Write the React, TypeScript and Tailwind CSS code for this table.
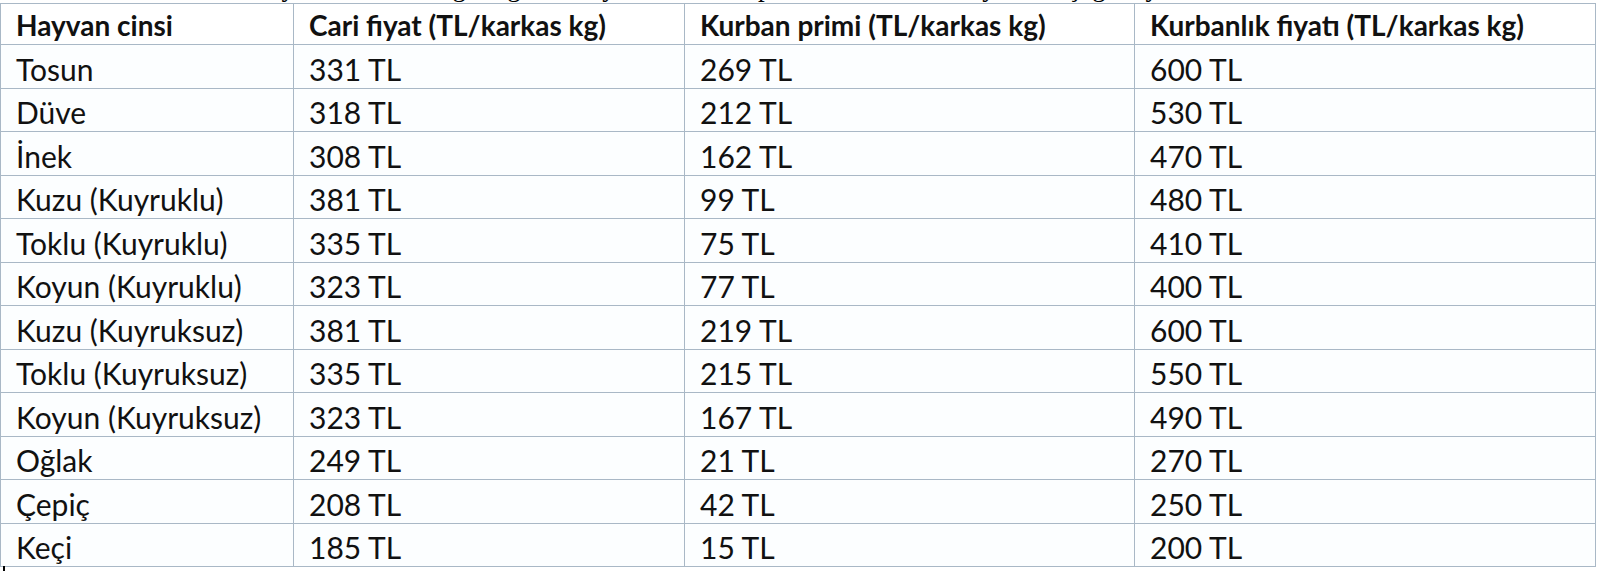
import React from "react";

const rows: [string, string, string, string][] = [
  ["Tosun", "331 TL", "269 TL", "600 TL"],
  ["Düve", "318 TL", "212 TL", "530 TL"],
  ["İnek", "308 TL", "162 TL", "470 TL"],
  ["Kuzu (Kuyruklu)", "381 TL", "99 TL", "480 TL"],
  ["Toklu (Kuyruklu)", "335 TL", "75 TL", "410 TL"],
  ["Koyun (Kuyruklu)", "323 TL", "77 TL", "400 TL"],
  ["Kuzu (Kuyruksuz)", "381 TL", "219 TL", "600 TL"],
  ["Toklu (Kuyruksuz)", "335 TL", "215 TL", "550 TL"],
  ["Koyun (Kuyruksuz)", "323 TL", "167 TL", "490 TL"],
  ["Oğlak", "249 TL", "21 TL", "270 TL"],
  ["Çepiç", "208 TL", "42 TL", "250 TL"],
  ["Keçi", "185 TL", "15 TL", "200 TL"],
];

const headers = [
  "Hayvan cinsi",
  "Cari fiyat (TL/karkas kg)",
  "Kurban primi (TL/karkas kg)",
  "Kurbanlık fiyatı (TL/karkas kg)",
];

const widths = ["w-[293px]", "w-[391px]", "w-[450px]", "w-[461px]"];

export default function App() {
  return (
    <div className="w-[1618px] h-[571px] bg-white overflow-hidden relative">
      <div className="h-[3px] overflow-hidden flex items-start">
        <p
          className="whitespace-nowrap text-[27px] leading-[27px] h-[27px] text-black pl-[250px] -mt-[26px] shrink-0"
          style={{ fontFamily: '"Liberation Serif", serif' }}
        >
          Hayvan cinslerine göre güncel fiyatlar, kurban primi ve kurbanlık fiyatları aşağıda yer almaktadır
        </p>
      </div>
      <table
        className="border-collapse w-[1596px] table-fixed text-[#111]"
        style={{ fontFamily: 'Lato, "Open Sans", sans-serif' }}
      >
        <thead>
          <tr className="h-[41px]">
            {headers.map((h, i) => (
              <th
                key={i}
                className={`${widths[i]} border border-[#a9b8c6] text-left font-bold text-[28px] leading-none pl-[15px] pt-[2px] align-middle whitespace-nowrap`}
              >
                {h}
              </th>
            ))}
          </tr>
        </thead>
        <tbody>
          {rows.map((r, ri) => (
            <tr key={ri} className="h-[43.5px]">
              {r.map((c, ci) => (
                <td
                  key={ci}
                  className="border border-[#a9b8c6] bg-[#fcfeff] text-[30px] leading-none pl-[15px] pt-[5px] align-middle whitespace-nowrap font-normal"
                >
                  {c}
                </td>
              ))}
            </tr>
          ))}
        </tbody>
      </table>
      <div className="absolute left-[3px] top-[566px] w-[2px] h-[5px] bg-black" />
    </div>
  );
}
